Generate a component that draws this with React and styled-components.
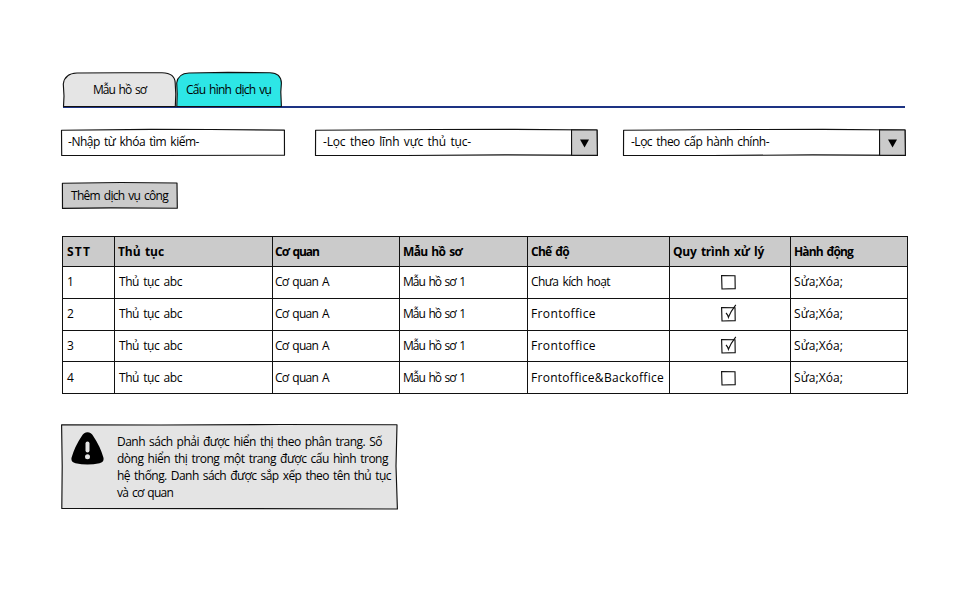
import React, { useLayoutEffect, useRef } from "react";
import styled, { createGlobalStyle } from "styled-components";

const GlobalStyle = createGlobalStyle`
  * { box-sizing: border-box; }
  body { margin: 0; background: #fff; }
`;

const INK = "#111";

const Page = styled.main`
  width: 960px;
  height: 600px;
  padding: 72px 52px 0 61px;
  display: flex;
  flex-direction: column;
  align-items: flex-start;
  background: #fff;
  color: #000;
  font: 12px/16px "Open Sans", "Noto Sans", sans-serif;
`;

const TextSpan = styled.span`
  display: inline-block;
  white-space: nowrap;
  word-spacing: 1.5px;
  font-weight: ${(p) => (p.$bold ? 700 : 400)};
`;

/* Spreads the letters so that the label takes the given width. */
function Label({ width, bold, children }) {
  const ref = useRef(null);
  useLayoutEffect(() => {
    const el = ref.current;
    el.style.letterSpacing = "0px";
    const natural = el.getBoundingClientRect().width;
    const count = Array.from(children).length;
    el.style.letterSpacing = `${(width - natural) / count}px`;
  }, [width, children]);
  return <TextSpan ref={ref} $bold={bold}>{children}</TextSpan>;
}

const Outline = styled.svg`
  position: absolute;
  inset: 0;
  width: 100%;
  height: 100%;
  overflow: visible;
  pointer-events: none;
  z-index: -1;
`;

function Sketch({ d, fill = "#fff" }) {
  return (
    <Outline>
      <path d={d} fill={fill} stroke={INK} strokeWidth="1.15" strokeLinejoin="round" />
    </Outline>
  );
}

const TabBar = styled.nav`
  width: 844px;
  height: 36px;
  margin-left: 1px;
  padding-left: 1px;
  display: flex;
  background: linear-gradient(#1d3383, #1d3383) 1px 34px / 842px 2px no-repeat;
`;

const Tab = styled.div`
  position: relative;
  z-index: 0;
  width: ${(p) => p.$width}px;
  height: 35px;
  padding: 10px 0 0 ${(p) => p.$indent}px;
`;

const Filters = styled.div`
  margin-top: 21px;
  display: flex;
  height: 27px;
`;

const Field = styled.div`
  position: relative;
  z-index: 0;
  display: flex;
  align-items: flex-start;
  justify-content: space-between;
  width: ${(p) => p.$width}px;
  height: 27px;
  margin-right: ${(p) => p.$gap || 0}px;
  padding: 5px 0 0 ${(p) => p.$indent || 7}px;
`;

const Arrow = styled.svg`
  width: 27px;
  height: 27px;
  margin-top: -5px;
  display: block;
`;

const AddButton = styled.button`
  position: relative;
  z-index: 0;
  width: 117px;
  height: 27px;
  margin: 26px 0 0;
  padding: 0 0 0 10px;
  display: block;
  border: 0;
  background: none;
  color: inherit;
  font: inherit;
  text-align: left;
`;

const Table = styled.div`
  margin: 27px 0 0 1px;
  display: grid;
  grid-template-columns: 52px 158px 127px 128px 142px 121px 117px;
  grid-template-rows: 30px 32px 32px 31px 32px;
  border: solid ${INK};
  border-width: 1px 0 0 1px;
`;

const Cell = styled.div`
  padding: ${(p) => (p.$low ? 8 : 7)}px 0 0 ${(p) => p.$indent}px;
  border: solid ${INK};
  border-width: 0 1px 1px 0;
  background: ${(p) => (p.$head ? "#cbcbcb" : "#fff")};
`;

const CheckIcon = styled.svg`
  display: block;
  width: 20px;
  height: 20px;
  margin: -2px 0 0 47px;
`;

function Check({ checked }) {
  return (
    <CheckIcon viewBox="0 0 20 20" fill="none" stroke={INK}>
      <path d="M1.6 3.6 L15 3.8 L15.2 16.6 L2 17 Z" strokeWidth="1.15" />
      {checked && <path d="M6 9 Q7.8 10.6 8.4 13.2 Q10.6 7.5 15.8 .8" strokeWidth="1.15" />}
    </CheckIcon>
  );
}

const Note = styled.aside`
  position: relative;
  z-index: 0;
  width: 337px;
  height: 86px;
  margin-top: 30px;
  padding: 9px 0 0 10px;
  display: flex;
`;

const WarningIcon = styled.svg`
  width: 33px;
  height: 33px;
  margin: -1px 13px 0 0;
`;

const NoteText = styled.div`
  display: flex;
  flex-direction: column;
  align-items: flex-start;
  line-height: 17px;
`;

const columns = [
  ["STT", 24, 4], ["Thủ tục", 46, 3], ["Cơ quan", 44, 2], ["Mẫu hồ sơ", 59, 3],
  ["Chế độ", 38, 3], ["Quy trình xử lý", 91, 3], ["Hành động", 59, 3],
];

const rows = [
  { id: "1", mode: "Chưa kích hoạt", modeWidth: 79, checked: false },
  { id: "2", mode: "Frontoffice", modeWidth: 65, checked: true },
  { id: "3", mode: "Frontoffice", modeWidth: 65, checked: true },
  { id: "4", mode: "Frontoffice&Backoffice", modeWidth: 133, checked: false },
];

const noteLines = [
  ["Danh sách phải được hiển thị theo phân trang. Số", 265],
  ["dòng hiển thị trong một trang được cấu hình trong", 271],
  ["hệ thống. Danh sách được sắp xếp theo tên thủ tục", 274],
  ["và cơ quan", 56],
];

function Select({ text, textWidth, gap }) {
  return (
    <Field $width={283} $gap={gap} $indent={8}>
      <Sketch d="M.6 1.2 L120 .5 L200 .4 L282 1 L282.4 26.4 L190 25.9 L90 26.5 L.5 26.4 Z" />
      <Label width={textWidth}>{text}</Label>
      <Arrow viewBox="0 0 27 27">
        <path d="M.5 .8 L26 1 L26.4 26.3 L.6 26 Z" fill="#cbcbcb" stroke={INK} strokeWidth="1.15" />
        <path d="M9 10.5 H18 L13.5 18.5 Z" fill="#000" />
      </Arrow>
    </Field>
  );
}

export default function App() {
  return (
    <>
      <GlobalStyle />
      <Page>
        <TabBar>
          <Tab $width={113} $indent={30}>
            <Sketch fill="#e5e5e5" d="M.5 34.5 L1 24 L.3 12 Q1.5 1.5 14 1 L60 .8 L99 .7 Q112 1 112.2 11 L112.8 22 L112.3 34.5 Z" />
            <Label width={53}>Mẫu hồ sơ</Label>
          </Tab>
          <Tab $width={106} $indent={10}>
            <Sketch fill="#2de6e6" d="M.8 34.5 L1.2 22 L.7 11 Q2 1.5 13 1 L52 .4 L94 .7 Q105 1 105.4 11 L104.8 20 L105.4 34.5 Z" />
            <Label width={85}>Cấu hình dịch vụ</Label>
          </Tab>
        </TabBar>

        <Filters>
          <Field $width={224} $gap={30}>
            <Sketch d="M.5 1.3 L90 .4 L150 .5 L223.4 1.1 L223.5 26.2 L100 26.5 L.7 26.4 Z" />
            <Label width={131}>-Nhập từ khóa tìm kiếm-</Label>
          </Field>
          <Select text="-Lọc theo lĩnh vực thủ tục-" textWidth={148} gap={25} />
          <Select text="-Lọc theo cấp hành chính-" textWidth={138} />
        </Filters>

        <AddButton>
          <Sketch fill="#cbcbcb" d="M1.4 1.2 L60 .5 L116 1 L116.3 26.2 L50 25.9 L1.5 26.4 Z" />
          <Label width={97}>Thêm dịch vụ công</Label>
        </AddButton>

        <Table>
          {columns.map(([name, width, indent]) => (
            <Cell key={name} $head $indent={indent}>
              <Label bold width={width}>{name}</Label>
            </Cell>
          ))}
          {rows.map((row, i) => {
            const low = i === 3;
            return (
              <React.Fragment key={row.id}>
                <Cell $low={low} $indent={4}><Label width={7}>{row.id}</Label></Cell>
                <Cell $low={low} $indent={4}><Label width={63}>Thủ tục abc</Label></Cell>
                <Cell $low={low} $indent={2}><Label width={54}>Cơ quan A</Label></Cell>
                <Cell $low={low} $indent={3}><Label width={62}>Mẫu hồ sơ 1</Label></Cell>
                <Cell $low={low} $indent={3}><Label width={row.modeWidth}>{row.mode}</Label></Cell>
                <Cell $low={low} $indent={3}><Check checked={row.checked} /></Cell>
                <Cell $low={low} $indent={3}><Label width={49}>Sửa;Xóa;</Label></Cell>
              </React.Fragment>
            );
          })}
        </Table>

        <Note>
          <Sketch fill="#e4e4e4" d="M.6 .8 L100 1 L220 .5 L336 .7 L335 42 L336.4 85 L180 84.6 L.8 84.4 L1.2 42 Z" />
          <WarningIcon viewBox="0 0 33 33">
            <path d="M16.5 .3 Q20 .3 22.5 4.5 Q29 14 32.4 25.5 Q33.5 30 28.5 31.3 Q16.5 33.7 4.5 31.3 Q-.5 30 .6 25.5 Q4 14 10.5 4.5 Q13 .3 16.5 .3 Z" fill="#000" />
            <path d="M16.5 11.5 V18.5" stroke="#e4e4e4" strokeWidth="4" strokeLinecap="round" />
            <circle cx="16.5" cy="24.7" r="2.5" fill="#e4e4e4" />
          </WarningIcon>
          <NoteText>
            {noteLines.map(([text, width]) => <Label key={text} width={width}>{text}</Label>)}
          </NoteText>
        </Note>
      </Page>
    </>
  );
}
